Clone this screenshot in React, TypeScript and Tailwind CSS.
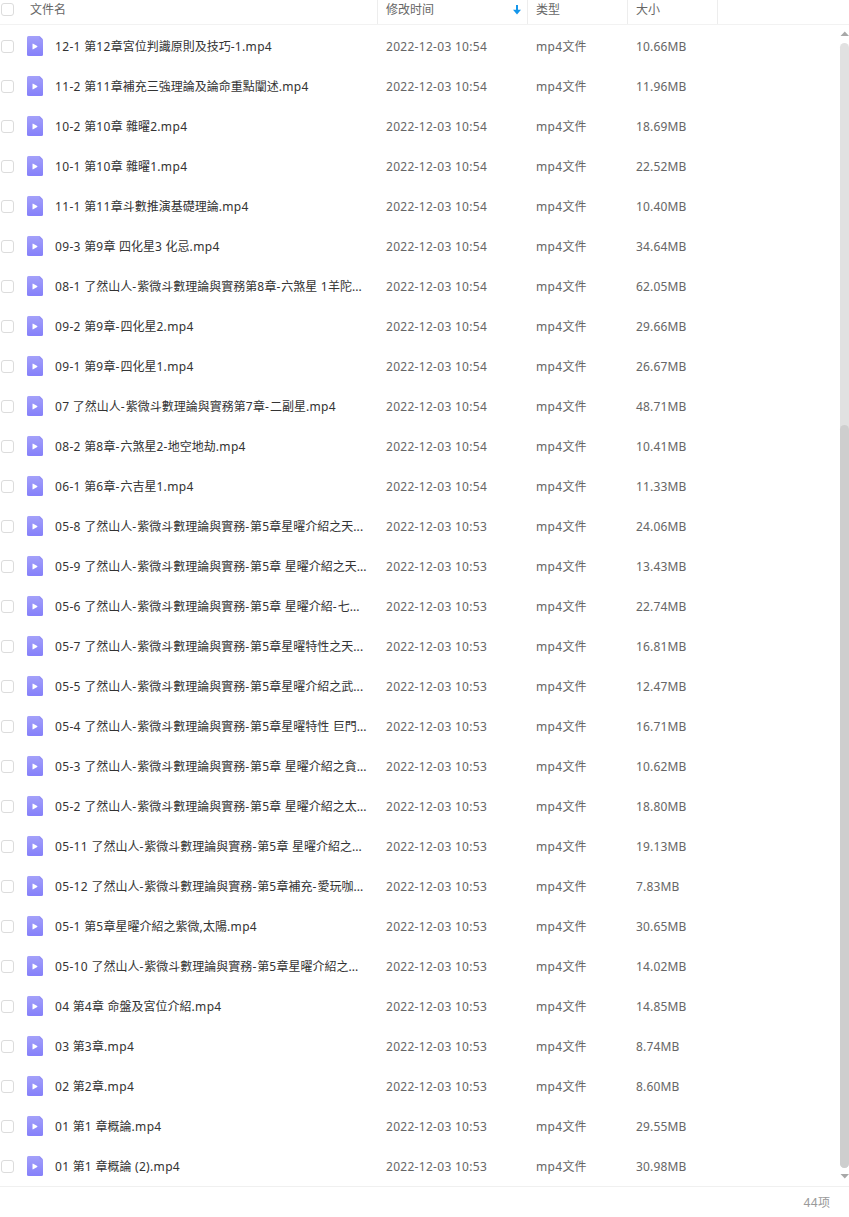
import React from 'react';

type FileRow = { name: string; time: string; size: string };

const row = (name: string, minute: string, size: string): FileRow => ({
  name,
  time: '2022-12-03 10:' + minute,
  size: size + 'MB',
});

const files: FileRow[] = [
  row('12-1 第12章宮位判識原則及技巧-1.mp4', '54', '10.66'),
  row('11-2 第11章補充三強理論及論命重點闡述.mp4', '54', '11.96'),
  row('10-2 第10章 雜曜2.mp4', '54', '18.69'),
  row('10-1 第10章 雜曜1.mp4', '54', '22.52'),
  row('11-1 第11章斗數推演基礎理論.mp4', '54', '10.40'),
  row('09-3 第9章 四化星3 化忌.mp4', '54', '34.64'),
  row('08-1 了然山人-紫微斗數理論與實務第8章-六煞星 1羊陀...', '54', '62.05'),
  row('09-2 第9章-四化星2.mp4', '54', '29.66'),
  row('09-1 第9章-四化星1.mp4', '54', '26.67'),
  row('07 了然山人-紫微斗數理論與實務第7章-二副星.mp4', '54', '48.71'),
  row('08-2 第8章-六煞星2-地空地劫.mp4', '54', '10.41'),
  row('06-1 第6章-六吉星1.mp4', '54', '11.33'),
  row('05-8 了然山人-紫微斗數理論與實務-第5章星曜介紹之天...', '53', '24.06'),
  row('05-9 了然山人-紫微斗數理論與實務-第5章 星曜介紹之天...', '53', '13.43'),
  row('05-6 了然山人-紫微斗數理論與實務-第5章 星曜介紹-七...', '53', '22.74'),
  row('05-7 了然山人-紫微斗數理論與實務-第5章星曜特性之天...', '53', '16.81'),
  row('05-5 了然山人-紫微斗數理論與實務-第5章星曜介紹之武...', '53', '12.47'),
  row('05-4 了然山人-紫微斗數理論與實務-第5章星曜特性 巨門...', '53', '16.71'),
  row('05-3 了然山人-紫微斗數理論與實務-第5章 星曜介紹之貪...', '53', '10.62'),
  row('05-2 了然山人-紫微斗數理論與實務-第5章 星曜介紹之太...', '53', '18.80'),
  row('05-11 了然山人-紫微斗數理論與實務-第5章 星曜介紹之...', '53', '19.13'),
  row('05-12 了然山人-紫微斗數理論與實務-第5章補充-愛玩咖...', '53', '7.83'),
  row('05-1 第5章星曜介紹之紫微,太陽.mp4', '53', '30.65'),
  row('05-10 了然山人-紫微斗數理論與實務-第5章星曜介紹之...', '53', '14.02'),
  row('04 第4章 命盤及宮位介紹.mp4', '53', '14.85'),
  row('03 第3章.mp4', '53', '8.74'),
  row('02 第2章.mp4', '53', '8.60'),
  row('01 第1 章概論.mp4', '53', '29.55'),
  row('01 第1 章概論 (2).mp4', '53', '30.98'),
];

// Latin runs are tracked slightly wider than the CJK characters around them.
function Mixed({ text }: { text: string }) {
  return (
    <>
      {text.split(/([\x20-\x7e]+)/).map((part, i) => {
        if (i % 2 === 0) return part;
        const tracking =
          part === '...' ? 'tracking-[0.05px]' : part === '-' ? 'tracking-[1.05px]' : 'tracking-[0.33px]';
        return (
          <span key={i} className={tracking}>
            {part}
          </span>
        );
      })}
    </>
  );
}

function Checkbox() {
  return <span className="block size-[13px] shrink-0 rounded-[3px] border border-[#dcdcdc] bg-white" />;
}

function VideoIcon() {
  return (
    <svg width="16" height="20" viewBox="0 0 16 20" className="shrink-0">
      <defs>
        <linearGradient id="file-fill" x1="0" y1="0" x2="0" y2="1">
          <stop offset="0" stopColor="#a3a0fa" />
          <stop offset="1" stopColor="#8580fa" />
        </linearGradient>
      </defs>
      <path d="M1.5 0H12.5L16 3.5V18.5Q16 20 14.5 20H1.5Q0 20 0 18.5V1.5Q0 0 1.5 0Z" fill="url(#file-fill)" />
      <path d="M12.5 0L16 3.5H13.5Q12.5 3.5 12.5 2.5Z" fill="#9490f6" />
      <path d="M5.5 8.1Q5.5 7.4 6.2 7.7L10.2 10.1Q10.7 10.5 10.2 10.9L6.2 13.3Q5.5 13.6 5.5 12.9Z" fill="#fff" />
    </svg>
  );
}

export default function App() {
  return (
    <div className="flex h-[1217px] w-[849px] flex-col overflow-hidden bg-white font-['Noto_Sans','Noto_Sans_CJK_SC',sans-serif] text-[12px] leading-[20px] whitespace-nowrap text-[#666]">
      <header className="flex h-[25px] shrink-0 border-b border-[#f2f2f2]">
        <div className="flex w-[378px] items-start border-r border-[#ededed] pl-px">
          <span className="mt-[3px]">
            <Checkbox />
          </span>
          <span className="ml-4">文件名</span>
        </div>
        <div className="flex w-[150px] items-start justify-between border-r border-[#ededed] pr-[6px] pl-2">
          <span>修改时间</span>
          <svg width="8" height="10" viewBox="0 0 8 10" className="mt-[5px]">
            <path d="M3 0H5V4.8H8L4 9.5L0 4.8H3Z" fill="#1496ea" />
          </svg>
        </div>
        <div className="w-[100px] border-r border-[#ededed] pl-2">类型</div>
        <div className="w-[90px] border-r border-[#ededed] pl-2">大小</div>
      </header>

      <div className="flex h-[1161px] shrink-0">
        <main className="flex flex-1 flex-col pt-[2px]">
          {files.map((file) => (
            <div key={file.name} className="flex h-10 shrink-0 items-center pb-px pl-px">
              <Checkbox />
              <span className="ml-[13px] pb-[2px]">
                <VideoIcon />
              </span>
              <span className="ml-3 w-[331px] text-[#333]">
                <Mixed text={file.name} />
              </span>
              <span className="w-[150px] tracking-[0.29px]">{file.time}</span>
              <span className="w-[100px]">
                <Mixed text="mp4文件" />
              </span>
              <span className="tracking-[0.15px]">{file.size}</span>
            </div>
          ))}
        </main>
        <aside className="flex w-[9px] shrink-0 flex-col">
          <svg width="9" height="18" viewBox="0 0 9 18" className="shrink-0">
            <path d="M0.5 11L4.8 6.5L9 11Z" fill="#a8a8a8" />
          </svg>
          <div className="flex h-[1125px] flex-col rounded-[5px] bg-[#e1e1e1] pt-[382px]">
            <div className="flex-1 rounded-[5px] bg-[#cecece]" />
          </div>
          <svg width="9" height="14" viewBox="0 0 9 14" className="shrink-0">
            <path d="M0.5 6L4.8 10.5L9 6Z" fill="#a8a8a8" />
          </svg>
        </aside>
      </div>

      <footer className="flex flex-1 items-start justify-end border-t border-[#f0f0f0] pt-[6px] pr-[19px] text-[#999]">
        <Mixed text="44项" />
      </footer>
    </div>
  );
}
